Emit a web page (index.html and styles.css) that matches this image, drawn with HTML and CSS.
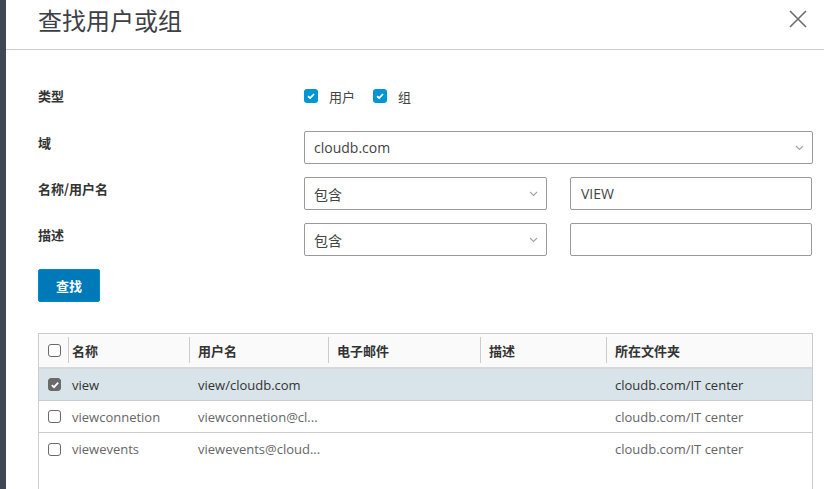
FILE: index.html
```html
<!DOCTYPE html>
<html lang="zh-CN">
<head>
<meta charset="utf-8">
<title>查找用户或组</title>
<link rel="stylesheet" href="styles.css">
</head>
<body>
<div class="page">
  <div class="strip"></div>
  <div class="modal">
    <div class="modal-header">
      <h1 class="title">查找用户或组</h1>
      <button class="close" aria-label="关闭">
        <svg width="18" height="18" viewBox="0 0 18 18"><path d="M1 1 L17 17 M17 1 L1 17" stroke="#6b6b6b" stroke-width="1.6" fill="none"/></svg>
      </button>
    </div>
    <div class="modal-body">
      <div class="form">
        <div class="label label-type">类型</div>
        <div class="field checks">
          <label class="check"><span class="cbox on"><svg width="10" height="8" viewBox="0 0 10 8"><path d="M2 4.2 L4.2 6 L8 2" stroke="#fff" stroke-width="1.8" fill="none"/></svg></span>用户</label>
          <label class="check"><span class="cbox on"><svg width="10" height="8" viewBox="0 0 10 8"><path d="M2 4.2 L4.2 6 L8 2" stroke="#fff" stroke-width="1.8" fill="none"/></svg></span>组</label>
        </div>

        <div class="label">域</div>
        <div class="field">
          <div class="select full"><span>cloudb.com</span><svg class="chev" width="9" height="6" viewBox="0 0 9 6"><path d="M1 1 L4.5 4.5 L8 1" stroke="#a0a7ae" stroke-width="1.2" fill="none"/></svg></div>
        </div>

        <div class="label">名称/用户名</div>
        <div class="field pair">
          <div class="select"><span>包含</span><svg class="chev" width="9" height="6" viewBox="0 0 9 6"><path d="M1 1 L4.5 4.5 L8 1" stroke="#a0a7ae" stroke-width="1.2" fill="none"/></svg></div>
          <div class="input"><span>VIEW</span></div>
        </div>

        <div class="label">描述</div>
        <div class="field pair">
          <div class="select"><span>包含</span><svg class="chev" width="9" height="6" viewBox="0 0 9 6"><path d="M1 1 L4.5 4.5 L8 1" stroke="#a0a7ae" stroke-width="1.2" fill="none"/></svg></div>
          <div class="input"></div>
        </div>
      </div>

      <button class="btn">查找</button>

      <div class="grid">
        <div class="row head">
          <div class="cell c-check"><span class="tbox"></span></div>
          <div class="cell c-name sep">名称</div>
          <div class="cell sep">用户名</div>
          <div class="cell sep">电子邮件</div>
          <div class="cell sep">描述</div>
          <div class="cell sep">所在文件夹</div>
        </div>
        <div class="row selected">
          <div class="cell c-check"><span class="tbox on"><svg width="10" height="8" viewBox="0 0 10 8"><path d="M1.8 4.2 L4 6.2 L8.2 1.6" stroke="#fff" stroke-width="1.8" fill="none"/></svg></span></div>
          <div class="cell c-name">view</div>
          <div class="cell">view/cloudb.com</div>
          <div class="cell"></div>
          <div class="cell"></div>
          <div class="cell">cloudb.com/IT center</div>
        </div>
        <div class="row">
          <div class="cell c-check"><span class="tbox"></span></div>
          <div class="cell c-name">viewconnetion</div>
          <div class="cell">viewconnetion@cl...</div>
          <div class="cell"></div>
          <div class="cell"></div>
          <div class="cell">cloudb.com/IT center</div>
        </div>
        <div class="row last">
          <div class="cell c-check"><span class="tbox"></span></div>
          <div class="cell c-name">viewevents</div>
          <div class="cell">viewevents@cloud...</div>
          <div class="cell"></div>
          <div class="cell"></div>
          <div class="cell">cloudb.com/IT center</div>
        </div>
        <div class="filler"></div>
      </div>
    </div>
  </div>
</div>
</body>
</html>
```

FILE: styles.css
```css
* { box-sizing: border-box; }
html, body {
  margin: 0;
  padding: 0;
  background: #fff;
  height: 489px;
  overflow: hidden;
}
body {
  font-family: "Open Sans", "Noto Sans CJK SC", sans-serif;
  font-size: 13px;
  color: #333;
}
.page {
  display: flex;
  height: 489px;
}
.strip {
  width: 6px;
  flex: none;
  background: #3e4753;
}
.modal {
  flex: 1;
  display: flex;
  flex-direction: column;
}
.modal-header {
  height: 50px;
  flex: none;
  border-bottom: 1px solid #cccccc;
  display: flex;
  align-items: flex-start;
  justify-content: space-between;
  padding: 0 17px 0 32px;
}
.title {
  margin: 0;
  font-family: "Noto Sans CJK SC", sans-serif;
  font-weight: 400;
  font-size: 24px;
  line-height: 40px;
  color: #3d4046;
}
.close {
  border: none;
  background: none;
  padding: 0;
  margin-top: 10px;
  width: 18px;
  height: 18px;
  display: flex;
}
.modal-body {
  flex: 1;
  padding: 34px 11px 0 32px;
  display: flex;
  flex-direction: column;
}
.form {
  display: grid;
  grid-template-columns: 266px 509px;
  row-gap: 13px;
}
.label {
  font-family: "Noto Sans CJK SC", sans-serif;
  font-weight: 700;
  font-size: 13px;
  line-height: 24px;
  color: #333;
}
.field { min-height: 24px; }
.checks {
  display: flex;
  align-items: center;
  gap: 18px;
  height: 24px;
  margin-bottom: 10px;
}
.check {
  display: flex;
  align-items: center;
  gap: 11px;
  font-family: "Noto Sans CJK SC", sans-serif;
  font-size: 13px;
  color: #444;
}
.cbox {
  width: 14px;
  height: 14px;
  border-radius: 3px;
  background: #0095d3;
  display: flex;
  align-items: center;
  justify-content: center;
}
.select, .input {
  height: 33px;
  border: 1px solid #9a9a9a;
  border-radius: 2px;
  display: flex;
  align-items: center;
  justify-content: space-between;
  padding: 0 8px 0 9px;
  font-size: 14px;
  color: #444;
  background: #fff;
}
.input { padding-left: 10px; }
.pair {
  display: grid;
  grid-template-columns: 243px 242px;
  column-gap: 23px;
}
.btn {
  align-self: flex-start;
  margin-top: 13px;
  width: 62px;
  height: 33px;
  border: 1px solid #0088c9;
  border-radius: 2px;
  background: #0079b8;
  color: #fff;
  font-family: "Noto Sans CJK SC", sans-serif;
  font-weight: 700;
  font-size: 13px;
  padding: 0;
}
.grid {
  margin-top: 31px;
  border: 1px solid #cccccc;
  border-bottom: none;
  display: flex;
  flex-direction: column;
  flex: 1;
}
.row {
  display: grid;
  grid-template-columns: 29px 121px 139px 152px 126px 1fr;
  height: 32px;
  flex: none;
  border-bottom: 1px solid #cccccc;
  align-items: center;
  color: #666;
}
.row.last { border-bottom: none; }
.row.head {
  height: 35px;
  background: #fafafa;
  border-bottom: 2px solid #d7d7d7;
  color: #333;
  font-family: "Noto Sans CJK SC", sans-serif;
  font-weight: 700;
}
.row.selected {
  background: #d9e4ea;
  color: #333;
}
.cell {
  padding-left: 9px;
  white-space: nowrap;
  overflow: hidden;
  height: 100%;
  display: flex;
  align-items: center;
  position: relative;
}
.cell.c-check { padding-left: 9px; }
.cell.c-name { padding-left: 4px; }
.head .sep::before {
  content: "";
  position: absolute;
  left: 0;
  top: 3px;
  bottom: 4px;
  width: 1px;
  background: #cccccc;
}
.tbox {
  width: 13px;
  height: 13px;
  border: 1px solid #6a6a6a;
  border-radius: 3px;
  background: #fff;
  display: flex;
  align-items: center;
  justify-content: center;
}
.tbox.on {
  background: #6a6a6a;
}
.filler { flex: 1; }
```
